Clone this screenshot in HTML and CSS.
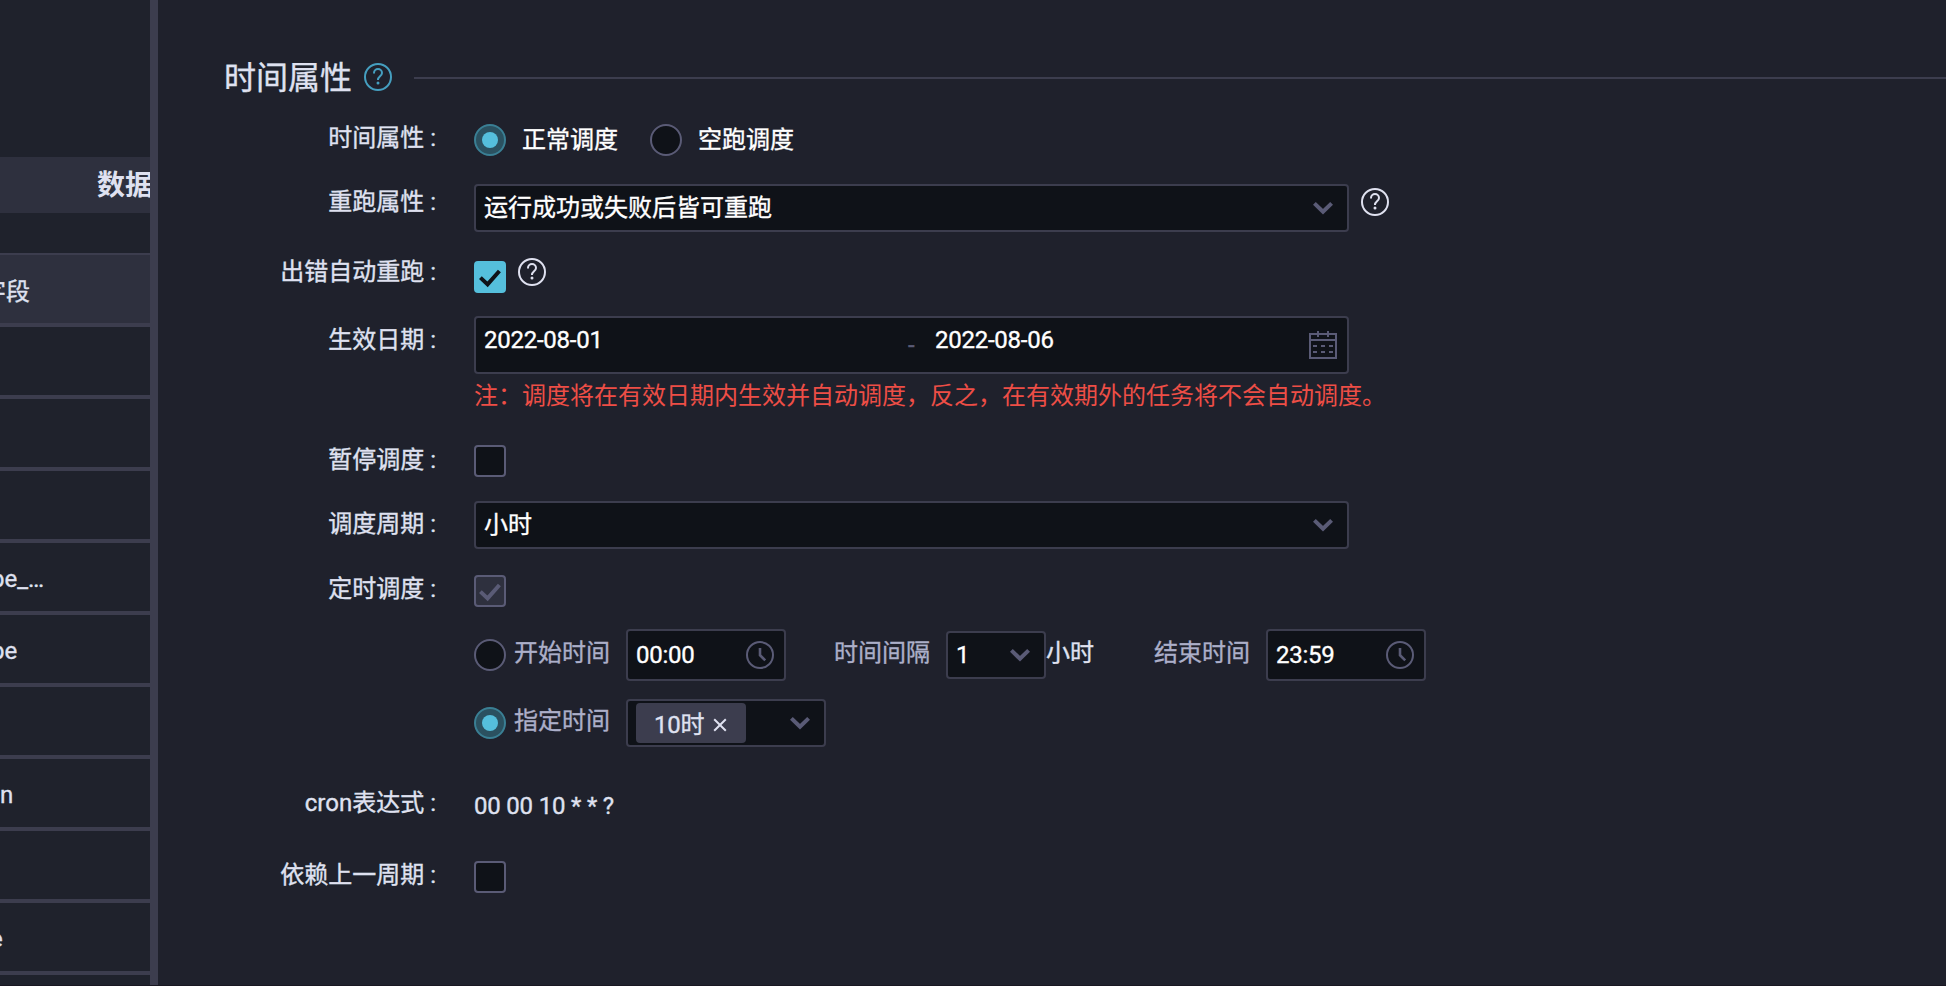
FILE: index.html
```
<!DOCTYPE html>
<html lang="zh-CN">
<head>
    <meta charset="UTF-8">
    <meta name="viewport" content="width=device-width, initial-scale=1.0">
    <title>时间属性</title>
    <link rel="stylesheet" href="styles.css">
</head>
<body>
    <!-- Shared icons -->
    <svg class="sprite" width="0" height="0">
        <symbol id="icon-help" viewBox="0 0 28 28">
            <circle cx="14" cy="14" r="13" fill="none" stroke="currentColor" stroke-width="2"/>
            <path d="M10 10.6V10a4 4 0 0 1 8 0c0 3.1-4 3.4-4 6.6v.4" fill="none" stroke="currentColor" stroke-width="2"/>
            <circle cx="14" cy="20" r="1.5" fill="currentColor"/>
        </symbol>
        <symbol id="icon-arrow" viewBox="0 0 20 14">
            <path d="M1.4 2.4L10 10.8L18.6 2.4" fill="none" stroke="currentColor" stroke-width="4"/>
        </symbol>
        <symbol id="icon-check" viewBox="0 0 24 20">
            <path d="M2.4 9.6L9.6 16.4L21.4 3" fill="none" stroke="currentColor" stroke-width="4"/>
        </symbol>
        <symbol id="icon-clock" viewBox="0 0 28 28">
            <circle cx="14" cy="14" r="13" fill="none" stroke="currentColor" stroke-width="2"/>
            <path d="M14 7V14.2L19.2 19.4" fill="none" stroke="currentColor" stroke-width="2.6"/>
        </symbol>
        <symbol id="icon-calendar" viewBox="0 0 28 28">
            <path d="M1 3H27V27H1ZM1 9H27M9 0V6M19 0V6" fill="none" stroke="currentColor" stroke-width="2"/>
            <path d="M4 15H8M12 15H16M20 15H24M4 21H8M12 21H16M20 21H24" fill="none" stroke="currentColor" stroke-width="2"/>
        </symbol>
        <symbol id="icon-close" viewBox="0 0 14 14">
            <path d="M1.2 1.2L12.8 12.8M12.8 1.2L1.2 12.8" fill="none" stroke="currentColor" stroke-width="2"/>
        </symbol>
    </svg>

    <div class="page">
        <aside class="sidebar">
            <div class="sidebar-title">数据</div>
            <div class="field-table">
                <div class="cell head"><span class="shift-head">字段</span></div>
                <div class="cell"></div>
                <div class="cell"></div>
                <div class="cell"></div>
                <div class="cell"><span class="shift-pe">pe_…</span></div>
                <div class="cell"><span class="shift-pe">pe</span></div>
                <div class="cell"></div>
                <div class="cell"><span>n</span></div>
                <div class="cell"></div>
                <div class="cell"><span class="shift-e">e</span></div>
                <div class="cell"></div>
            </div>
        </aside>

        <main class="drawer">
            <h2 class="section-title">
                <span>时间属性</span>
                <svg class="icon help"><use href="#icon-help"/></svg>
            </h2>

            <div class="form">
                <div class="label">时间属性</div>
                <div class="control time-type">
                    <span class="radio checked"></span>
                    <span class="radio-text">正常调度</span>
                    <span class="radio"></span>
                    <span class="radio-text">空跑调度</span>
                </div>

                <div class="label">重跑属性</div>
                <div class="control rerun">
                    <div class="input select wide">
                        <span class="value">运行成功或失败后皆可重跑</span>
                        <svg class="arrow"><use href="#icon-arrow"/></svg>
                    </div>
                    <svg class="icon help"><use href="#icon-help"/></svg>
                </div>

                <div class="label">出错自动重跑</div>
                <div class="control auto-rerun">
                    <span class="checkbox checked"><svg><use href="#icon-check"/></svg></span>
                    <svg class="icon help"><use href="#icon-help"/></svg>
                </div>

                <div class="label">生效日期</div>
                <div class="control dates">
                    <div class="input range wide">
                        <span class="start-date">2022-08-01</span>
                        <span class="separator">-</span>
                        <span class="end-date">2022-08-06</span>
                        <svg class="icon"><use href="#icon-calendar"/></svg>
                    </div>
                    <p class="note">注：调度将在有效日期内生效并自动调度，反之，在有效期外的任务将不会自动调度。</p>
                </div>

                <div class="label">暂停调度</div>
                <div class="control pause">
                    <span class="checkbox"></span>
                </div>

                <div class="label">调度周期</div>
                <div class="control cycle">
                    <div class="input select wide">
                        <span class="value">小时</span>
                        <svg class="arrow"><use href="#icon-arrow"/></svg>
                    </div>
                </div>

                <div class="label">定时调度</div>
                <div class="control timing">
                    <span class="checkbox checked disabled"><svg><use href="#icon-check"/></svg></span>
                    <div class="timing-line first">
                        <span class="radio"></span>
                        <span class="sub-label">开始时间</span>
                        <div class="input time">
                            <span>00:00</span>
                            <svg class="icon"><use href="#icon-clock"/></svg>
                        </div>
                        <span class="sub-label spaced">时间间隔</span>
                        <div class="input select interval">
                            <span>1</span>
                            <svg class="arrow"><use href="#icon-arrow"/></svg>
                        </div>
                        <span class="unit">小时</span>
                        <span class="sub-label spaced">结束时间</span>
                        <div class="input time">
                            <span>23:59</span>
                            <svg class="icon"><use href="#icon-clock"/></svg>
                        </div>
                    </div>
                    <div class="timing-line second">
                        <span class="radio checked"></span>
                        <span class="sub-label">指定时间</span>
                        <div class="input select hours">
                            <span class="tag"><span>10时</span><svg><use href="#icon-close"/></svg></span>
                            <svg class="arrow"><use href="#icon-arrow"/></svg>
                        </div>
                    </div>
                </div>

                <div class="label">cron表达式</div>
                <div class="control cron">00 00 10 * * ?</div>

                <div class="label">依赖上一周期</div>
                <div class="control depend">
                    <span class="checkbox"></span>
                </div>
            </div>
        </main>
    </div>
</body>
</html>
```
FILE: styles.css
```
* {
    margin: 0;
    padding: 0;
    box-sizing: border-box;
}

body {
    font-family: Roboto, 'Noto Sans CJK SC', sans-serif;
    font-size: 24px;
    color: #dfe1f0;
    background-color: #1f212c;
    overflow: hidden;
    -webkit-text-stroke: 0.35px currentColor;
}

svg {
    display: block;
    flex: none;
}

.sprite {
    position: absolute;
}

.page {
    display: flex;
    height: 100vh;
    border-bottom: 1px solid #191722;
}

/* Left table */
.sidebar {
    width: 158px;
    flex: none;
    padding-top: 157px;
    border-right: 8px solid #3c3d4e;
    background-color: #1f222c;
    overflow: hidden;
    white-space: nowrap;
}

.sidebar-title {
    height: 56px;
    line-height: 58px;
    padding-left: 97px;
    background-color: #2e303e;
    font-size: 28px;
    font-weight: 700;
    overflow: hidden;
    -webkit-text-stroke: 0;
}

.field-table {
    margin-top: 40px;
    border-top: 2px solid #3c3d4e;
}

.cell {
    height: 72px;
    padding-top: 4px;
    line-height: 64px;
    border-bottom: 4px solid #3c3d4e;
}

.cell span {
    display: block;
}

.cell.head {
    padding-top: 5px;
    background-color: #2e303e;
}

.cell .shift-head {
    margin-left: -18px;
}

.cell .shift-pe {
    margin-left: -9px;
}

.cell .shift-e {
    margin-left: -10px;
}

/* Form */
.drawer {
    flex: 1;
    padding: 54px 0 0 66px;
}

.section-title {
    display: flex;
    align-items: center;
    height: 48px;
    font-size: 32px;
    font-weight: 400;
}

.section-title span {
    margin-bottom: 7px;
}

.section-title .help {
    margin: -2px 22px 0 12px;
    color: #459fc0;
}

.section-title::after {
    content: '';
    flex: 1;
    height: 2px;
    background-color: #3c3d4e;
}

.form {
    display: grid;
    grid-template-columns: 212px 1fr;
    grid-template-rows: 63px 70px 68px 120px 64px 65px 214px 72px 60px;
    column-gap: 38px;
    margin-top: 13px;
}

.label {
    line-height: 48px;
    text-align: right;
    white-space: nowrap;
}

.label:first-child {
    line-height: 47px;
}

.label::after {
    content: ':';
    margin-left: 6px;
}

.control {
    display: flex;
    align-items: flex-start;
}

.icon {
    width: 28px;
    height: 28px;
}

.radio {
    width: 32px;
    height: 32px;
    flex: none;
    border: 2px solid #5a5b76;
    border-radius: 50%;
    background-color: #0f1218;
}

.radio.checked {
    display: flex;
    align-items: center;
    justify-content: center;
    border-color: #3a7f94;
    background-color: #2b5160;
}

.radio.checked::after {
    content: '';
    width: 16px;
    height: 16px;
    border-radius: 50%;
    background-color: #55bfdc;
}

.checkbox {
    display: flex;
    align-items: center;
    justify-content: center;
    width: 32px;
    height: 32px;
    flex: none;
    border: 2px solid #5a5b76;
    border-radius: 4px;
    background-color: #0f1218;
    color: #0f1218;
}

.checkbox svg {
    width: 24px;
    height: 20px;
    margin-top: 2px;
}

.checkbox.checked {
    border-color: #55bfdc;
    background-color: #55bfdc;
}

.checkbox.disabled {
    border-color: #5a5b76;
    background-color: #2e303e;
    color: #5a5b76;
}

.input {
    display: flex;
    align-items: center;
    justify-content: space-between;
    height: 48px;
    flex: none;
    padding-left: 8px;
    border: 2px solid #3c3d4e;
    border-radius: 4px;
    background-color: #0f1218;
    color: #fff;
    letter-spacing: -0.25px;
}

.input .icon {
    color: #5a5b76;
}

.select {
    padding-right: 14px;
}

.value {
    margin-bottom: 5px;
    letter-spacing: 0;
}

.arrow {
    width: 20px;
    height: 14px;
    color: #5a5b76;
}

.wide {
    width: 875px;
}

.time-type {
    padding-top: 9px;
}

.radio-text {
    margin: 0 32px 0 16px;
    line-height: 32px;
    color: #fff;
}

.rerun {
    padding-top: 6px;
}

.rerun .help {
    margin: 4px 0 0 12px;
}

.auto-rerun {
    padding-top: 13px;
}

.auto-rerun .help {
    margin: -3px 0 0 12px;
}

.dates {
    flex-direction: column;
}

.range {
    height: 58px;
    padding-right: 10px;
}

.start-date {
    width: 424px;
    margin-top: -10px;
}

.separator {
    width: 27px;
    color: #5a5b76;
}

.end-date {
    flex: 1;
    margin-top: -10px;
}

.note {
    line-height: 44px;
    color: #ee4e46;
    white-space: nowrap;
    -webkit-text-stroke: 0;
}

.pause {
    padding-top: 9px;
}

.cycle {
    padding-top: 1px;
}

.timing {
    flex-direction: column;
    padding-top: 10px;
}

.timing-line {
    display: flex;
    align-items: center;
}

.timing-line.first {
    margin-top: 22px;
}

.timing-line.second {
    margin-top: 18px;
}

.sub-label {
    margin: 0 16px 10px 8px;
    color: #acafc9;
}

.sub-label.spaced {
    margin-left: 48px;
}

.unit {
    margin: 0 12px 10px 0;
}

.time {
    width: 160px;
    height: 52px;
    padding-right: 10px;
}

.interval {
    width: 100px;
}

.hours {
    width: 200px;
}

.tag {
    display: flex;
    align-items: center;
    width: 110px;
    height: 40px;
    padding-left: 18px;
    border-radius: 4px;
    background-color: #3c3d4e;
    color: #dfe1f0;
}

.tag span {
    margin-bottom: 2px;
}

.tag svg {
    width: 14px;
    height: 14px;
    margin: 4px 0 0 9px;
}

.cron {
    padding-top: 13px;
    letter-spacing: -0.2px;
}

.depend {
    padding-top: 10px;
}
```
